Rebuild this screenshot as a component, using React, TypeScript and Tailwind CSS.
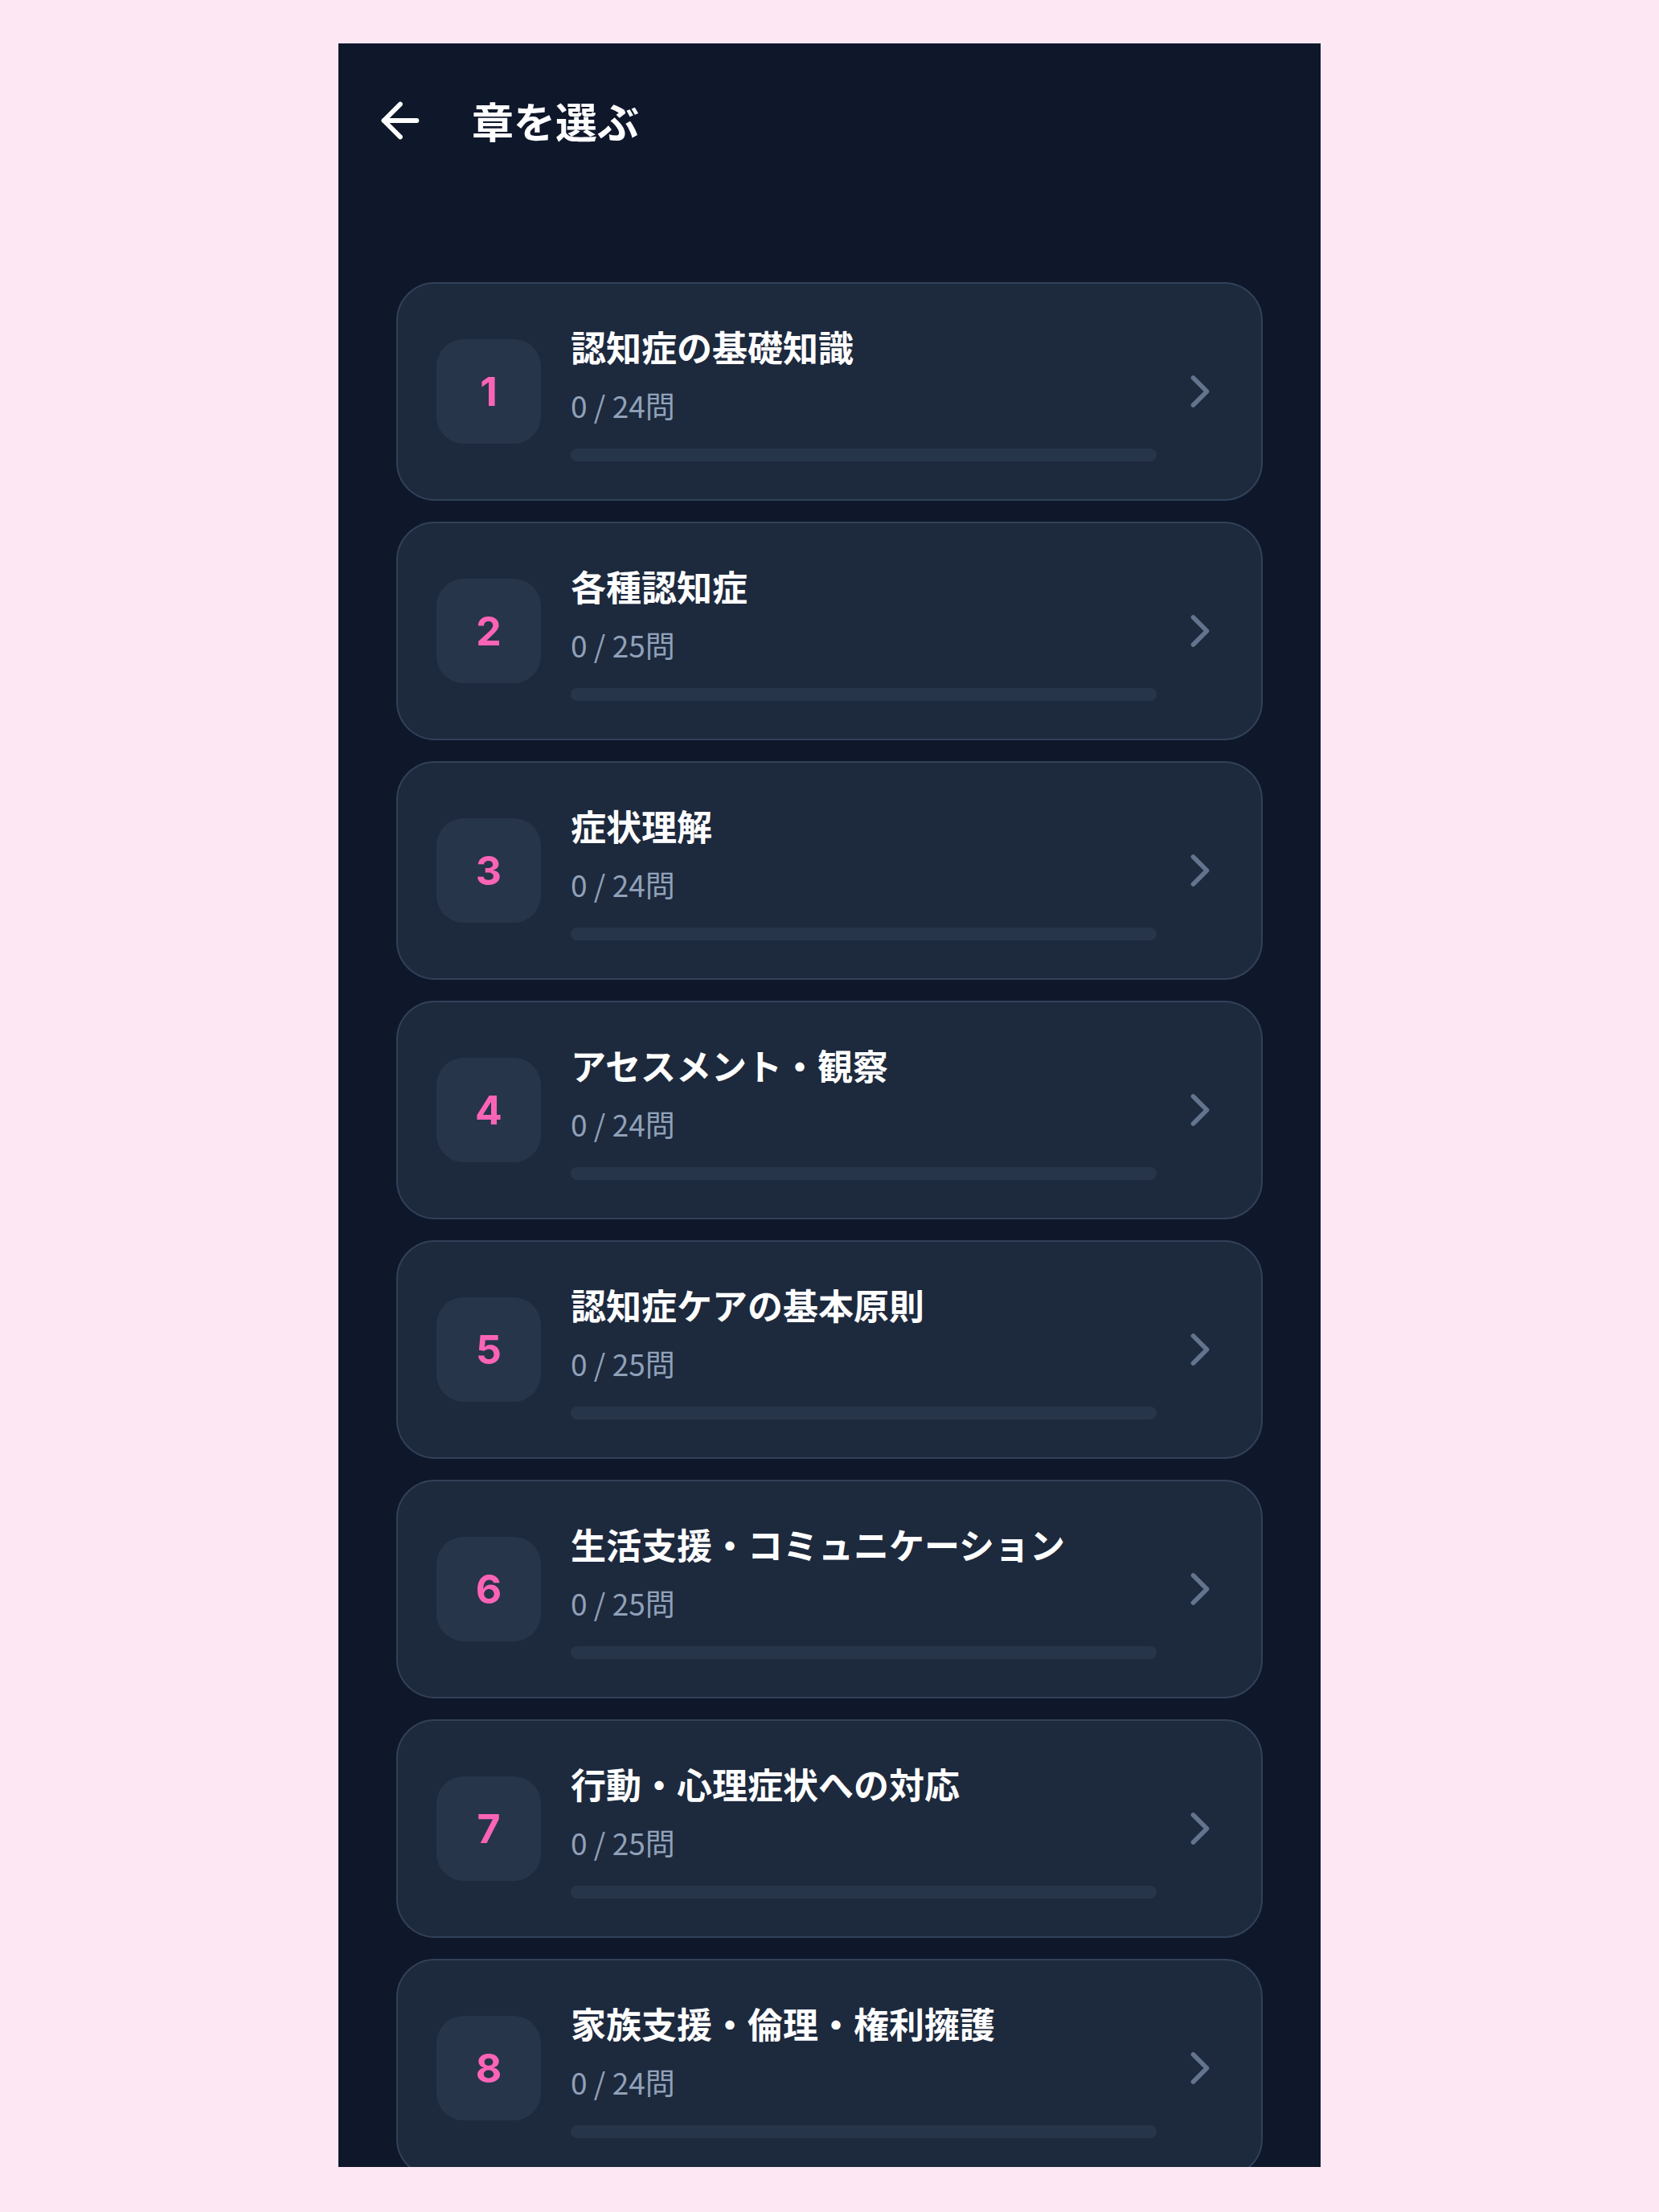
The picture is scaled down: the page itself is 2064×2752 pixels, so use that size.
import { ArrowLeft, ChevronRight } from "lucide-react";

type Chapter = {
	no: number;
	title: string;
	total: number;
	done: number;
};

const chapters: Chapter[] = [
	{ no: 1, title: "認知症の基礎知識", total: 24, done: 0 },
	{ no: 2, title: "各種認知症", total: 25, done: 0 },
	{ no: 3, title: "症状理解", total: 24, done: 0 },
	{ no: 4, title: "アセスメント・観察", total: 24, done: 0 },
	{ no: 5, title: "認知症ケアの基本原則", total: 25, done: 0 },
	{ no: 6, title: "生活支援・コミュニケーション", total: 25, done: 0 },
	{ no: 7, title: "行動・心理症状への対応", total: 25, done: 0 },
	{ no: 8, title: "家族支援・倫理・権利擁護", total: 24, done: 0 },
];

function ChapterCard({ chapter }: { chapter: Chapter }) {
	const pct = chapter.total ? (chapter.done / chapter.total) * 100 : 0;

	return (
		<button
			type="button"
			className="flex h-[272px] w-full shrink-0 items-center rounded-[48px] border-2 border-slate-700 bg-slate-800 pl-[48px] pr-[42px] text-left"
		>
			<div className="flex h-[130px] w-[130px] shrink-0 items-center justify-center rounded-[34px] bg-slate-700/50">
				<span className="font-['Inter',sans-serif] text-[50px] font-bold leading-none text-pink-400">
					{chapter.no}
				</span>
			</div>

			<div className="ml-[37px] min-w-0 flex-1">
				<h2 className="truncate text-[44px] font-bold leading-[62px] text-white">
					{chapter.title}
				</h2>
				<p className="mt-[17px] text-[37px] leading-[50px] text-slate-400">
					{chapter.done} / {chapter.total}問
				</p>
				<div className="mt-[29px] h-[16px] w-full overflow-hidden rounded-full bg-slate-700/50">
					<div
						className="h-full rounded-full bg-pink-400"
						style={{ width: `${pct}%` }}
					/>
				</div>
			</div>

			<ChevronRight
				className="ml-[20px] shrink-0 text-slate-500"
				size={68}
				strokeWidth={2}
			/>
		</button>
	);
}

export default function App() {
	return (
		<div className="min-h-screen bg-pink-100 pb-[56px] pt-[54px] font-['Noto_Sans_CJK_JP','Noto_Sans',sans-serif]">
			<main className="mx-auto flex h-[2642px] w-[1222px] flex-col overflow-hidden bg-slate-900">
				<header className="flex h-[192px] shrink-0 items-center pl-[42px]">
					<button type="button" className="text-white">
						<ArrowLeft size={70} strokeWidth={2} />
					</button>
					<h1 className="ml-[54px] text-[52px] font-bold leading-none text-white">
						章を選ぶ
					</h1>
				</header>

				<div className="flex flex-col gap-[26px] px-[72px] pt-[105px]">
					{chapters.map((c) => (
						<ChapterCard key={c.no} chapter={c} />
					))}
				</div>
			</main>
		</div>
	);
}
